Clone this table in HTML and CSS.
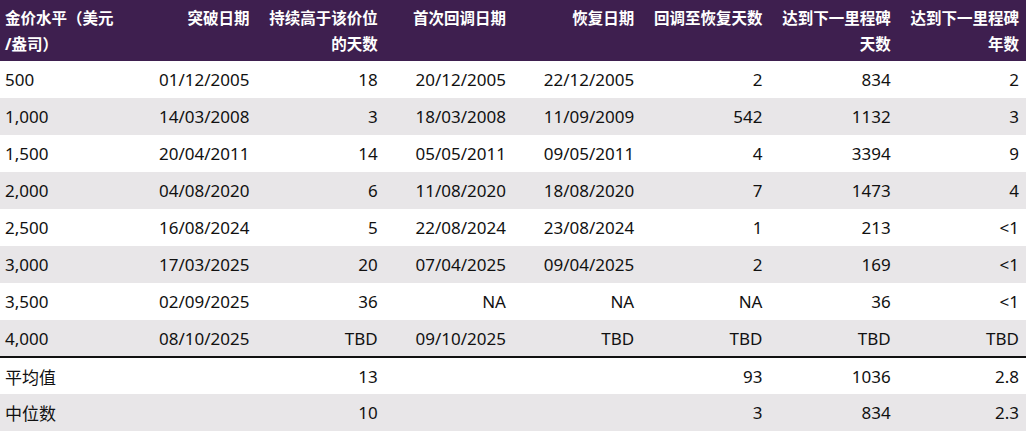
FILE: index.html
```html
<!DOCTYPE html>
<html lang="zh-CN">
<head>
<meta charset="utf-8">
<title>金价里程碑</title>
<link rel="stylesheet" href="styles.css">
</head>
<body>
<table class="gold">
  <colgroup>
    <col><col><col><col><col><col><col><col>
  </colgroup>
  <thead>
    <tr>
      <th class="first">金价水平（美元<br>/盎司）</th>
      <th>突破日期</th>
      <th>持续高于该价位<br>的天数</th>
      <th>首次回调日期</th>
      <th>恢复日期</th>
      <th>回调至恢复天数</th>
      <th>达到下一里程碑<br>天数</th>
      <th>达到下一里程碑<br>年数</th>
    </tr>
  </thead>
  <tbody>
    <tr><td class="first">500</td><td>01/12/2005</td><td>18</td><td>20/12/2005</td><td>22/12/2005</td><td>2</td><td>834</td><td>2</td></tr>
    <tr><td class="first">1,000</td><td>14/03/2008</td><td>3</td><td>18/03/2008</td><td>11/09/2009</td><td>542</td><td>1132</td><td>3</td></tr>
    <tr><td class="first">1,500</td><td>20/04/2011</td><td>14</td><td>05/05/2011</td><td>09/05/2011</td><td>4</td><td>3394</td><td>9</td></tr>
    <tr><td class="first">2,000</td><td>04/08/2020</td><td>6</td><td>11/08/2020</td><td>18/08/2020</td><td>7</td><td>1473</td><td>4</td></tr>
    <tr><td class="first">2,500</td><td>16/08/2024</td><td>5</td><td>22/08/2024</td><td>23/08/2024</td><td>1</td><td>213</td><td>&lt;1</td></tr>
    <tr><td class="first">3,000</td><td>17/03/2025</td><td>20</td><td>07/04/2025</td><td>09/04/2025</td><td>2</td><td>169</td><td>&lt;1</td></tr>
    <tr><td class="first">3,500</td><td>02/09/2025</td><td>36</td><td>NA</td><td>NA</td><td>NA</td><td>36</td><td>&lt;1</td></tr>
    <tr><td class="first">4,000</td><td>08/10/2025</td><td>TBD</td><td>09/10/2025</td><td>TBD</td><td>TBD</td><td>TBD</td><td>TBD</td></tr>
  </tbody>
  <tfoot>
    <tr><td class="first">平均值</td><td></td><td>13</td><td></td><td></td><td>93</td><td>1036</td><td>2.8</td></tr>
    <tr><td class="first">中位数</td><td></td><td>10</td><td></td><td></td><td>3</td><td>834</td><td>2.3</td></tr>
  </tfoot>
</table>
</body>
</html>
```
FILE: styles.css
```css
html, body {
  margin: 0;
  padding: 0;
  background: #ffffff;
}

.gold {
  width: 1026px;
  table-layout: fixed;
  border-collapse: collapse;
  font-family: "Noto Sans", "Noto Sans CJK SC", sans-serif;
  color: #111111;
}

.gold col {
  width: 12.5%;
}

.gold th {
  background: #3e1f4f;
  color: #ffffff;
  font-weight: 700;
  font-size: 15.5px;
  line-height: 26px;
  height: 61px;
  box-sizing: border-box;
  padding: 5px 7px 4px 5px;
  text-align: right;
  vertical-align: top;
  white-space: nowrap;
}

.gold td {
  font-size: 17px;
  height: 37px;
  box-sizing: border-box;
  padding: 0 7px 0 5px;
  text-align: right;
  vertical-align: middle;
  white-space: nowrap;
}

.gold .first {
  text-align: left;
}

.gold tbody tr:nth-child(even) td,
.gold tfoot tr:nth-child(even) td {
  background: #e8e6e8;
}

.gold tfoot tr:first-child td {
  border-top: 2px solid #111111;
}
```
